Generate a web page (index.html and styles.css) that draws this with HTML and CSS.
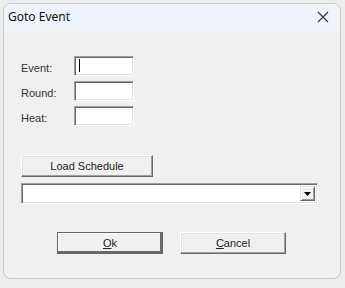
FILE: index.html
```html
<!DOCTYPE html>
<html lang="en">
  <head>
    <meta charset="UTF-8" />
    <title>Goto Event</title>
    <link rel="stylesheet" href="styles.css">
  </head>
  <body>
    <div class="window">
      <div class="titlebar">
        <span class="title">Goto Event</span>
        <svg class="close" width="12" height="12" viewBox="0 0 12 12">
          <path d="M1 1 L11 11 M11 1 L1 11" stroke="#333" stroke-width="1.1" fill="none" />
        </svg>
      </div>

      <div class="content">
        <div class="fields">
          <div class="field">
            <span class="label">Event:</span>
            <div class="input"><span class="caret"></span></div>
          </div>
          <div class="field">
            <span class="label">Round:</span>
            <div class="input"></div>
          </div>
          <div class="field">
            <span class="label">Heat:</span>
            <div class="input"></div>
          </div>
        </div>

        <button class="btn load-btn">Load Schedule</button>

        <div class="combo">
          <div class="combo-btn">
            <svg width="7" height="4" viewBox="0 0 7 4"><path d="M0 0 H7 L3.5 4 Z" fill="#000" /></svg>
          </div>
        </div>

        <div class="actions">
          <button class="btn default-btn"><u>O</u>k</button>
          <button class="btn"><u>C</u>ancel</button>
        </div>
      </div>
    </div>
  </body>
</html>
```

FILE: styles.css
```css
* {
  margin: 0;
  padding: 0;
  box-sizing: border-box;
}
body {
  background: #ececec;
  padding: 3px;
  font-family: "Liberation Sans", Arial, sans-serif;
  font-size: 11px;
  color: #222;
}

.window {
  width: 338px;
  height: 276px;
  border: 1px solid #c9c9c9;
  border-radius: 8px;
  background: #f0f0f0;
  overflow: hidden;
}

.titlebar {
  height: 26px;
  background: #eef3f9;
  display: flex;
  align-items: center;
  justify-content: space-between;
  padding: 0 11px 1px 4px;
}
.title {
  font-family: "Noto Sans", sans-serif;
  font-size: 12px;
  color: #111;
}

.content {
  padding: 26px 0 0 17px;
}

/* Form rows */
.fields {
  display: flex;
  flex-direction: column;
  gap: 5px;
}
.field {
  display: flex;
  align-items: center;
}
.label {
  width: 53px;
  padding-top: 3px;
  color: #333;
}

.input,
.combo {
  background: #fff;
  border-top: 1px solid #a0a0a0;
  border-left: 1px solid #a0a0a0;
  border-right: 1px solid #fff;
  border-bottom: 1px solid #fff;
  box-shadow: inset 1px 1px 0 #696969, inset -1px -1px 0 #e3e3e3;
}
.input {
  width: 60px;
  height: 20px;
  padding: 2px 0 0 4px;
}
.caret {
  display: block;
  width: 1px;
  height: 13px;
  background: #000;
}

/* Buttons */
.btn {
  display: block;
  height: 22px;
  background: #f0f0f0;
  font-family: inherit;
  font-size: 11px;
  color: #222;
  border-top: 1px solid #fff;
  border-left: 1px solid #fff;
  border-right: 1px solid #696969;
  border-bottom: 1px solid #696969;
  box-shadow: inset -1px -1px 0 #a0a0a0, inset 1px 1px 0 #e3e3e3;
}
.load-btn {
  width: 132px;
  margin-top: 29px;
}

.combo {
  width: 297px;
  height: 21px;
  margin-top: 6px;
  display: flex;
  justify-content: flex-end;
  padding: 2px;
}
.combo-btn {
  width: 15px;
  height: 100%;
  background: #f0f0f0;
  border-top: 1px solid #e3e3e3;
  border-left: 1px solid #e3e3e3;
  border-right: 1px solid #696969;
  border-bottom: 1px solid #696969;
  box-shadow: inset 1px 1px 0 #fff, inset -1px -1px 0 #a0a0a0;
  display: flex;
  align-items: center;
  justify-content: center;
}

.actions {
  display: flex;
  gap: 17px;
  margin: 28px 0 0 36px;
}
.actions .btn {
  width: 106px;
}
.default-btn {
  border: 1px solid #646464;
  box-shadow: inset -2px -2px 0 #696969, inset 1px 1px 0 #fff;
}
```
